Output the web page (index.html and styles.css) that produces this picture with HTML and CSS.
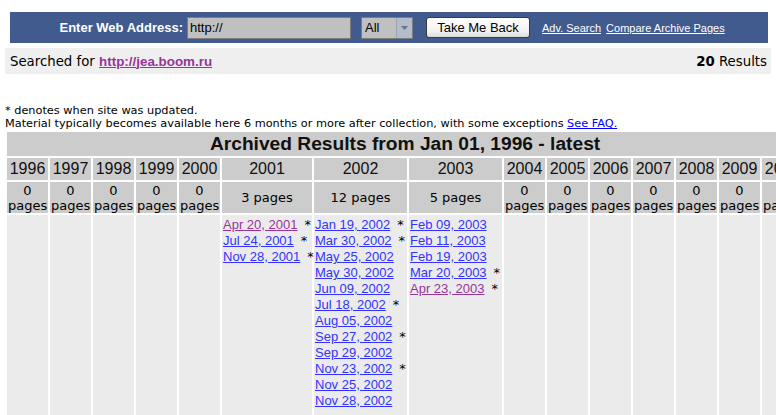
FILE: index.html
```html
<!DOCTYPE html>
<html>
<head>
<meta charset="utf-8">
<title>Wayback Machine</title>
<link rel="stylesheet" href="styles.css">
</head>
<body>
<div class="topbar">
  <span class="label">Enter Web Address:</span>
  <span class="urlbox">http://</span>
  <span class="select"><span class="sel-val">All</span><span class="sel-arrow"><svg width="7" height="4" viewBox="0 0 7 4"><path d="M0 0H7L3.5 4Z" fill="#6b7486"/></svg></span></span>
  <span class="btn">Take Me Back</span>
  <a class="toplink first" href="#">Adv. Search</a>
  <a class="toplink" href="#">Compare Archive Pages</a>
</div>
<div class="searchbar">
  <span>Searched for <a class="site" href="#">http://jea.boom.ru</a></span>
  <span><b>20</b> Results</span>
</div>
<div class="notes">
  <div>* denotes when site was updated.</div>
  <div>Material typically becomes available here 6 months or more after collection, with some exceptions <a class="faq" href="#">See FAQ.</a></div>
</div>
<table class="results">
  <colgroup>
    <col class="c-s"><col class="c-s"><col class="c-s"><col class="c-s"><col class="c-s">
    <col class="c-01"><col class="c-02"><col class="c-03">
    <col class="c-s"><col class="c-s"><col class="c-s"><col class="c-s"><col class="c-s"><col class="c-s"><col class="c-s">
  </colgroup>
  <tr><td class="title" colspan="15">Archived Results from Jan 01, 1996 - latest</td></tr>
  <tr class="years">
    <td>1996</td><td>1997</td><td>1998</td><td>1999</td><td>2000</td>
    <td>2001</td><td>2002</td><td>2003</td>
    <td>2004</td><td>2005</td><td>2006</td><td>2007</td><td>2008</td><td>2009</td><td>2010</td>
  </tr>
  <tr class="counts">
    <td>0<br>pages</td><td>0<br>pages</td><td>0<br>pages</td><td>0<br>pages</td><td>0<br>pages</td>
    <td>3 pages</td><td>12 pages</td><td>5 pages</td>
    <td>0<br>pages</td><td>0<br>pages</td><td>0<br>pages</td><td>0<br>pages</td><td>0<br>pages</td><td>0<br>pages</td><td>0<br>pages</td>
  </tr>
  <tr class="data">
    <td></td><td></td><td></td><td></td><td></td>
    <td>
      <div class="d"><a class="v" href="#">Apr 20, 2001</a><span class="star">*</span></div>
      <div class="d"><a href="#">Jul 24, 2001</a><span class="star">*</span></div>
      <div class="d"><a href="#">Nov 28, 2001</a><span class="star">*</span></div>
    </td>
    <td>
      <div class="d"><a href="#">Jan 19, 2002</a><span class="star">*</span></div>
      <div class="d"><a href="#">Mar 30, 2002</a><span class="star">*</span></div>
      <div class="d"><a href="#">May 25, 2002</a></div>
      <div class="d"><a href="#">May 30, 2002</a></div>
      <div class="d"><a href="#">Jun 09, 2002</a></div>
      <div class="d"><a href="#">Jul 18, 2002</a><span class="star">*</span></div>
      <div class="d"><a href="#">Aug 05, 2002</a></div>
      <div class="d"><a href="#">Sep 27, 2002</a><span class="star">*</span></div>
      <div class="d"><a href="#">Sep 29, 2002</a></div>
      <div class="d"><a href="#">Nov 23, 2002</a><span class="star">*</span></div>
      <div class="d"><a href="#">Nov 25, 2002</a></div>
      <div class="d"><a href="#">Nov 28, 2002</a></div>
    </td>
    <td>
      <div class="d"><a href="#">Feb 09, 2003</a></div>
      <div class="d"><a href="#">Feb 11, 2003</a></div>
      <div class="d"><a href="#">Feb 19, 2003</a></div>
      <div class="d"><a href="#">Mar 20, 2003</a><span class="star">*</span></div>
      <div class="d"><a class="v" href="#">Apr 23, 2003</a><span class="star">*</span></div>
    </td>
    <td></td><td></td><td></td><td></td><td></td><td></td><td></td>
  </tr>
</table>
</body>
</html>
```

FILE: styles.css
```css
html {
  overflow: hidden;
}
body {
  margin: 0;
  background: #ffffff;
  color: #000000;
  font-family: "DejaVu Sans", Verdana, sans-serif;
}
.topbar {
  margin: 12px 8px 0 10px;
  height: 31px;
  background: #425b8f;
  display: flex;
  align-items: center;
}
.label {
  width: 173px;
  text-align: right;
  color: #ffffff;
  font: bold 13px "Liberation Sans", Arial, sans-serif;
  margin-right: 4px;
}
.urlbox {
  box-sizing: border-box;
  width: 164px;
  height: 22px;
  border: 1px solid #7c7c7c;
  background: #c0c0c0;
  font: 13px "Liberation Sans", Arial, sans-serif;
  line-height: 20px;
  padding-left: 2px;
}
.select {
  box-sizing: border-box;
  margin-left: 10px;
  width: 52px;
  height: 22px;
  border: 1px solid #7c7c7c;
  background: #c0c0c0;
  display: flex;
  font: 13px "Liberation Sans", Arial, sans-serif;
}
.sel-val {
  flex: 1;
  line-height: 20px;
  padding-left: 3px;
}
.sel-arrow {
  width: 15px;
  background: #b3bccb;
  border-left: 1px solid #9aa3b3;
  display: flex;
  align-items: center;
  justify-content: center;
}
.btn {
  box-sizing: border-box;
  margin-left: 13px;
  width: 104px;
  height: 21px;
  border: 1px solid #3a3a3a;
  border-radius: 3px;
  background: linear-gradient(#ffffff, #f2f2f2 70%, #dcdcdc);
  font: 13px "Liberation Sans", Arial, sans-serif;
  line-height: 19px;
  text-align: center;
}
.toplink {
  color: #ffffff;
  font: 11px "Liberation Sans", Arial, sans-serif;
  margin-left: 5px;
}
.toplink.first {
  margin-left: 12px;
}
.searchbar {
  margin: 5px 5px 0 5px;
  height: 26px;
  background: #efefef;
  display: flex;
  align-items: center;
  justify-content: space-between;
  padding: 0 4px 0 5px;
  font-size: 13.3px;
}
.site {
  color: #993399;
  font: bold 13.4px "Liberation Sans", Arial, sans-serif;
}
.notes {
  margin: 30px 0 0 5px;
  font-size: 11.3px;
  line-height: 13px;
}
.faq {
  color: #0000ff;
}
.results {
  margin: 0 0 0 5px;
  border-spacing: 2px;
  table-layout: fixed;
  width: 800px;
  background: #ffffff;
}
.c-s { width: 41px; }
.c-01 { width: 90px; }
.c-02 { width: 93px; }
.c-03 { width: 93px; }
.results td {
  padding: 0 1px;
  text-align: center;
  background: #cccccc;
  white-space: nowrap;
}
.results td.title {
  height: 24px;
  font: bold 19.2px "Liberation Sans", Arial, sans-serif;
  color: #111111;
}
.years td {
  height: 22px;
  font: 16px "Liberation Sans", Arial, sans-serif;
  color: #111111;
}
.counts td {
  height: 31px;
  font-size: 13px;
  line-height: 15px;
}
.data td {
  background: #ebebeb;
  text-align: left;
  vertical-align: top;
  padding: 2px 1px 0 1px;
  height: 220px;
}
.d {
  font: 13px "Liberation Sans", Arial, sans-serif;
  line-height: 16px;
}
.d a {
  color: #3333ff;
}
.d a.v {
  color: #993399;
}
.star {
  margin-left: 7px;
  font-family: "DejaVu Sans", sans-serif;
  font-size: 13px;
}
```
